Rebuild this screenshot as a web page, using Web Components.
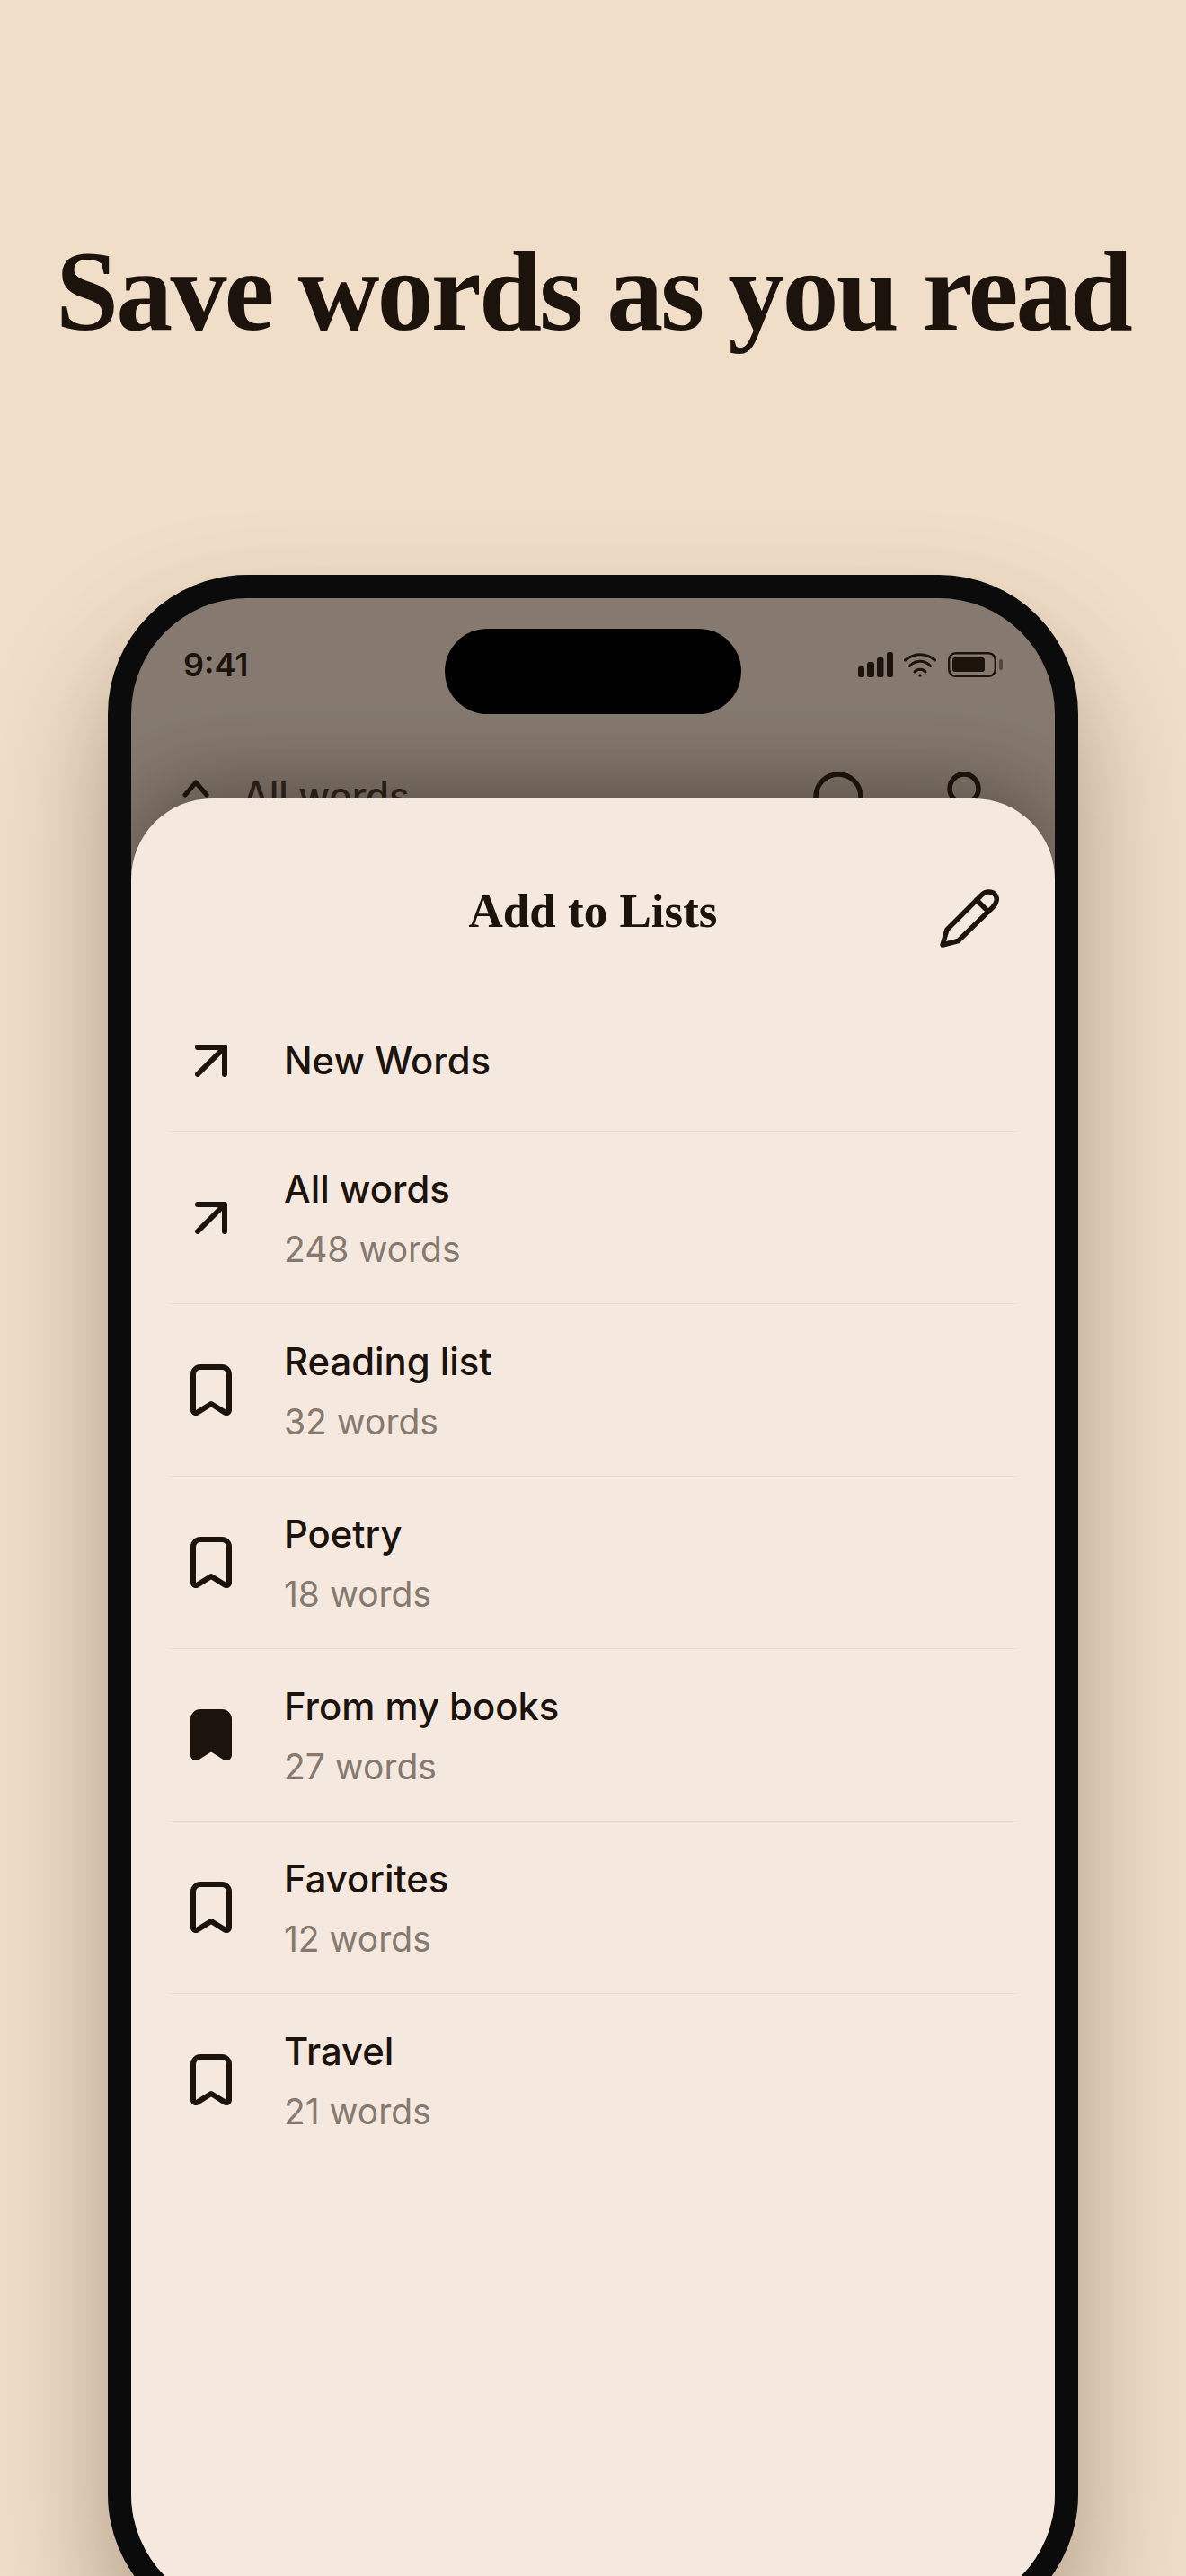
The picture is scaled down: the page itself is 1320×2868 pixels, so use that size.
<!DOCTYPE html>
<html lang="en">
<head>
<meta charset="utf-8">
<title>Save words as you read</title>
<style>
  html, body {
    margin: 0;
    height: 2868px;
    overflow: hidden;
    background: #f0dec9;
    color: #1c130c;
    font-family: "Inter", "Liberation Sans", sans-serif;
  }
</style>
</head>
<body>
<promo-page>
  <span slot="headline">Save words as you read</span>
  <phone-frame>
    <status-bar slot="status"></status-bar>
    <behind-header slot="behind"></behind-header>
    <list-sheet slot="sheet" heading="Add to Lists">
      <list-row icon="arrow" single>New Words</list-row>
      <list-row icon="arrow">All words<span slot="sub">248 words</span></list-row>
      <list-row icon="bookmark">Reading list<span slot="sub">32 words</span></list-row>
      <list-row icon="bookmark">Poetry<span slot="sub">18 words</span></list-row>
      <list-row icon="bookmark-filled">From my books<span slot="sub">27 words</span></list-row>
      <list-row icon="bookmark">Favorites<span slot="sub">12 words</span></list-row>
      <list-row icon="bookmark" last>Travel<span slot="sub">21 words</span></list-row>
    </list-sheet>
  </phone-frame>
</promo-page>

<script>
const INK = "#1c130c";

const ICONS = {
  arrow: `<svg width="36" height="36" viewBox="0 0 36 36" fill="none" stroke="${INK}" stroke-width="6" stroke-linecap="round" stroke-linejoin="round"><path d="M3 3H33V33M33 3L3 33"/></svg>`,
  bookmark: `<svg width="46" height="58" viewBox="0 0 46 58" fill="none" stroke="${INK}" stroke-width="6" stroke-linecap="round" stroke-linejoin="round"><path d="M3 11a8 8 0 0 1 8-8H35a8 8 0 0 1 8 8V51a3 3 0 0 1-4.500 2.600L23 44 7.500 53.600A3 3 0 0 1 3 51Z"/></svg>`,
  "bookmark-filled": `<svg width="46" height="58" viewBox="0 0 46 58" fill="${INK}" stroke="${INK}" stroke-width="6" stroke-linecap="round" stroke-linejoin="round"><path d="M3 11a8 8 0 0 1 8-8H35a8 8 0 0 1 8 8V51a3 3 0 0 1-4.500 2.600L23 44 7.500 53.600A3 3 0 0 1 3 51Z"/></svg>`,
};

class PromoPage extends HTMLElement {
  constructor() {
    super();
    this.attachShadow({ mode: "open" }).innerHTML = `
    <style>
      :host { display: block; height: 2868px; overflow: hidden; }
      .headline {
        height: 640px;
        display: flex;
        justify-content: center;
        padding-top: 252px;
        box-sizing: border-box;
        font: 700 126px/146px "Liberation Serif", serif;
        letter-spacing: -2.8px;
        color: ${INK};
        white-space: nowrap;
      }
    </style>
    <div class="headline"><slot name="headline"></slot></div>
    <slot></slot>`;
  }
}

class PhoneFrame extends HTMLElement {
  constructor() {
    super();
    this.attachShadow({ mode: "open" }).innerHTML = `
    <style>
      :host {
        display: block;
        width: 1080px;
        height: 2292px;
        margin: 0 auto;
        box-sizing: border-box;
        padding: 26px;
        background: #0b0b0b;
        border-radius: 155px;
        box-shadow: 0 70px 130px rgba(60, 35, 10, .36);
      }
      .screen {
        position: relative;
        height: 100%;
        border-radius: 129px;
        overflow: hidden;
        background: #867a70;
      }
      .island {
        position: absolute;
        top: 34px;
        left: 349px;
        width: 330px;
        height: 95px;
        border-radius: 48px;
        background: #000;
      }
      .sheet {
        position: absolute;
        inset: 223px 0 0 0;
      }
    </style>
    <div class="screen">
      <slot name="status"></slot>
      <slot name="behind"></slot>
      <div class="island"></div>
      <div class="sheet"><slot name="sheet"></slot></div>
    </div>`;
  }
}

class StatusBar extends HTMLElement {
  constructor() {
    super();
    this.attachShadow({ mode: "open" }).innerHTML = `
    <style>
      :host {
        display: flex;
        align-items: center;
        justify-content: space-between;
        height: 28px;
        padding: 60px 57px 0 58px;
        color: ${INK};
      }
      .time { font: 600 36px/28px "Inter", sans-serif; }
      .icons { display: flex; align-items: center; gap: 12px; }
      svg { display: block; }
    </style>
    <span class="time">9:41</span>
    <div class="icons">
      <svg width="39" height="28" viewBox="0 0 39 28" fill="${INK}">
        <rect x="0" y="16" width="7" height="12" rx="2.500"/>
        <rect x="10" y="11" width="8" height="17" rx="2.500"/>
        <rect x="21" y="6" width="7.500" height="22" rx="2.500"/>
        <rect x="32" y="0" width="7" height="28" rx="2.500"/>
      </svg>
      <svg width="36" height="28" viewBox="0 0 36 28" fill="none" stroke="${INK}" stroke-width="3" stroke-linecap="round">
        <path d="M1.500 9A25 25 0 0 1 34.500 9"/>
        <path d="M6.500 15.500A15 15 0 0 1 29.500 15.500"/>
        <path d="M12 22A8 8 0 0 1 24 22"/>
        <circle cx="18" cy="26" r="1.800" fill="${INK}" stroke="none"/>
      </svg>
      <svg width="62" height="28" viewBox="0 0 62 28" style="margin-left:1px">
        <rect x="1.200" y="1.200" width="51.600" height="25.600" rx="7.500" fill="none" stroke="${INK}" stroke-width="2.400"/>
        <rect x="5" y="6" width="36" height="16" rx="3" fill="${INK}"/>
        <rect x="57" y="8" width="4" height="12" rx="2" fill="${INK}" opacity=".5"/>
      </svg>
    </div>`;
  }
}

class BehindHeader extends HTMLElement {
  constructor() {
    super();
    this.attachShadow({ mode: "open" }).innerHTML = `
    <style>
      :host {
        display: flex;
        align-items: flex-start;
        height: 60px;
        padding: 105px 0 0 57px;
        color: ${INK};
      }
      .label { font: 500 42px/54px "Inter", sans-serif; margin-left: 37px; opacity: .85; }
      svg { display: block; flex: none; }
      .search { margin-left: auto; margin-top: 0; }
      .person { margin: 0 82px 0 93px; }
    </style>
    <svg width="30" height="50" viewBox="0 0 30 50" fill="none" stroke="${INK}" stroke-width="5" stroke-linecap="round" stroke-linejoin="round" style="margin-top:9px">
      <path d="M3 17L15 3 27 17M3 31L15 45 27 31"/>
    </svg>
    <span class="label">All words</span>
    <svg class="search" width="56" height="56" viewBox="0 0 56 56" fill="none" stroke="${INK}" stroke-width="5.500">
      <circle cx="28" cy="28" r="25"/>
    </svg>
    <svg class="person" width="38" height="56" viewBox="0 0 38 56" fill="none" stroke="${INK}" stroke-width="5.500">
      <circle cx="19" cy="19" r="16"/>
    </svg>`;
  }
}

class ListSheet extends HTMLElement {
  constructor() {
    super();
    this.attachShadow({ mode: "open" }).innerHTML = `
    <style>
      :host {
        display: block;
        height: 100%;
        box-sizing: border-box;
        background: #f5e9df;
        border-radius: 90px 90px 0 0;
        box-shadow: 0 -14px 90px rgba(28, 19, 12, .42);
      }
      header {
        height: 214px;
        box-sizing: border-box;
        padding: 97px 62px 0 62px;
        display: grid;
        grid-template-columns: 1fr auto 1fr;
        align-items: start;
      }
      h2 {
        grid-column: 2;
        margin: 0;
        font: 700 53px/56px "Liberation Serif", serif;
        color: ${INK};
        white-space: nowrap;
      }
      .edit { grid-column: 3; justify-self: end; margin-top: 3px; display: block; }
      .rows { padding: 0 42px; }
    </style>
    <header>
      <h2 id="heading"></h2>
      <svg class="edit" width="66" height="66" viewBox="0 0 66 66" fill="none" stroke="${INK}" stroke-width="5.500" stroke-linecap="round" stroke-linejoin="round">
        <path d="M3 63L8 46 46 8C50 3.500 57 2.500 61 6.500 65 10.500 63.500 16.500 59 21L20.500 58.500Z"/>
        <path d="M41 13L54 26"/>
      </svg>
    </header>
    <div class="rows"><slot></slot></div>`;
    this.shadowRoot.getElementById("heading").textContent = this.getAttribute("heading");
  }
}

class ListRow extends HTMLElement {
  constructor() {
    super();
    this.attachShadow({ mode: "open" }).innerHTML = `
    <style>
      :host {
        display: flex;
        align-items: center;
        min-height: 157px;
        box-sizing: border-box;
        padding: 36px 0;
        border-bottom: 1px solid #ebdfd4;
      }
      :host([last]) { border-bottom: none; }
      .icon {
        flex: none;
        width: 46px;
        margin: 0 58px 0 24px;
        display: flex;
        justify-content: center;
      }
      svg { display: block; }
      .text { min-width: 0; display: flex; flex-direction: column; gap: 13px; margin: 2px 0 -2px; }
      :host([single]) .text { margin: 0; }
      .title { font: 500 41.8px/53px "Inter", sans-serif; color: ${INK}; }
      .sub { font: 400 39px/53px "Inter", sans-serif; color: #867a70; }
    </style>
    <span class="icon">${ICONS[this.getAttribute("icon")]}</span>
    <div class="text">
      <div class="title"><slot></slot></div>
      <slot name="sub" class="sub"></slot>
    </div>`;
  }
}

customElements.define("promo-page", PromoPage);
customElements.define("phone-frame", PhoneFrame);
customElements.define("status-bar", StatusBar);
customElements.define("behind-header", BehindHeader);
customElements.define("list-sheet", ListSheet);
customElements.define("list-row", ListRow);
</script>
</body>
</html>
